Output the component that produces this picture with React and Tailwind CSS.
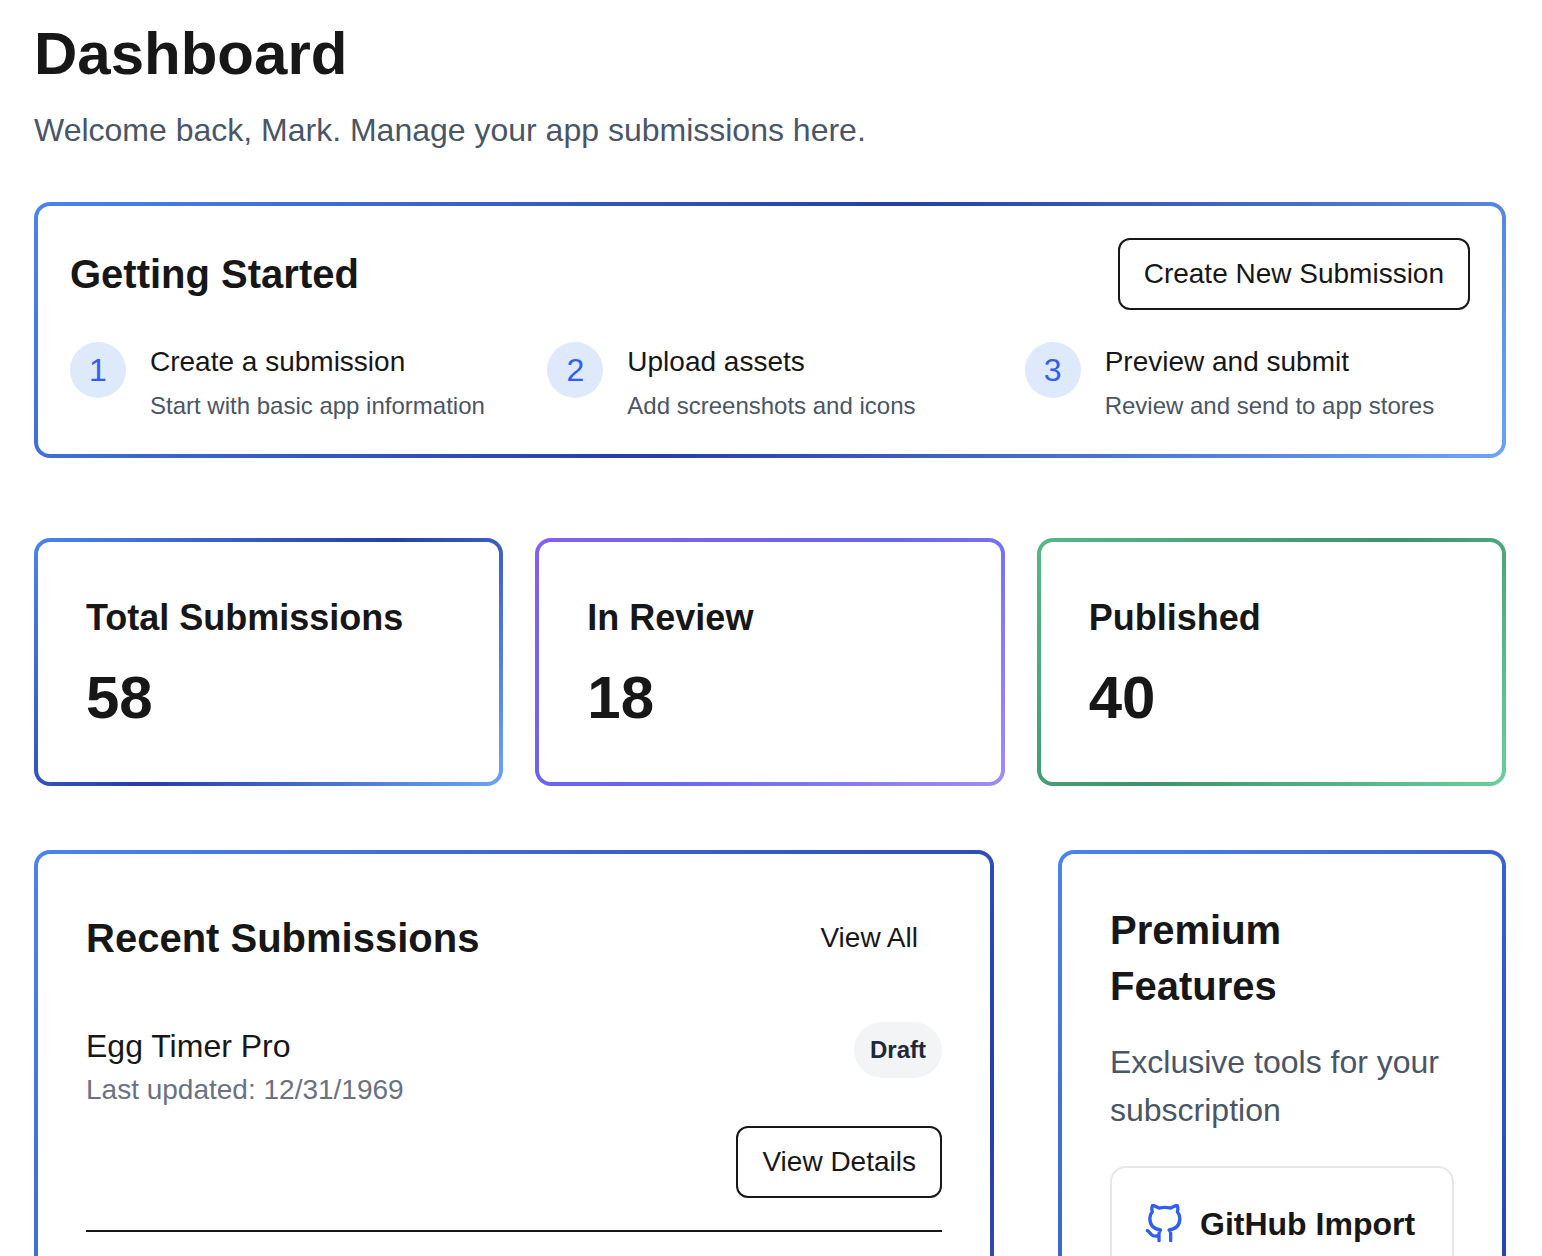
import { FiGithub } from 'react-icons/fi';

const steps = [
  { title: 'Create a submission', text: 'Start with basic app information' },
  { title: 'Upload assets', text: 'Add screenshots and icons' },
  { title: 'Preview and submit', text: 'Review and send to app stores' },
];

const stats = [
  { label: 'Total Submissions', value: 58, tone: 'blue' },
  { label: 'In Review', value: 18, tone: 'violet' },
  { label: 'Published', value: 40, tone: 'green' },
];

const submissions = [{ name: 'Egg Timer Pro', updated: '12/31/1969', status: 'Draft' }];

const tones = {
  blue: 'from-[#4c83ee] via-[#253ea8] to-[#6ca4f8]',
  violet: 'from-[#855ef0] via-[#6466eb] to-[#a28cf5]',
  green: 'from-[#56b785] via-[#41916b] to-[#69d09d]',
};

const GradientCard = ({ tone = 'blue', className = '', children }) => (
  <section className={`flex rounded-2xl bg-linear-135/srgb p-1 ${tones[tone]}`}>
    <div className={`min-w-0 flex-1 rounded-xl bg-white ${className}`}>{children}</div>
  </section>
);

const OutlineButton = ({ children }) => (
  <button
    type="button"
    className="h-[72px] rounded-xl border-2 border-neutral-900 px-6 text-[28px] leading-10 hover:bg-gray-100"
  >
    {children}
  </button>
);

const SubmissionRow = ({ submission }) => (
  <li className="border-b-2 border-neutral-900 pb-8">
    <div className="flex items-start justify-between">
      <div>
        <h3 className="text-[32px] leading-12">{submission.name}</h3>
        <p className="text-[28px] leading-10 text-gray-500">Last updated: {submission.updated}</p>
      </div>
      <span className="rounded-full bg-gray-100 px-4 py-3 text-2xl font-semibold text-gray-800">
        {submission.status}
      </span>
    </div>
    <div className="mt-4 flex justify-end">
      <OutlineButton>View Details</OutlineButton>
    </div>
  </li>
);

const App = () => {
  return (
    <main className="h-screen overflow-hidden bg-white pt-[18px] pr-9 pl-[34px] font-['Liberation_Sans',Arial,sans-serif] text-neutral-900">
      <header>
        <h1 className="text-6xl leading-[72px] font-bold">Dashboard</h1>
        <p className="mt-4 text-[32px] leading-12 text-gray-600">
          Welcome back, Mark. Manage your app submissions here.
        </p>
      </header>

      <div className="mt-12">
        <GradientCard className="p-8">
          <div className="flex items-center justify-between">
            <h2 className="text-[40px] leading-14 font-semibold">Getting Started</h2>
            <OutlineButton>Create New Submission</OutlineButton>
          </div>
          <ol className="mt-8 grid grid-cols-3 gap-8">
            {steps.map((step, index) => (
              <li key={step.title} className="flex items-start gap-6">
                <span className="flex size-14 shrink-0 items-center justify-center rounded-full bg-[#dee9fc] text-[32px] leading-12 text-[#2f5ef5]">
                  {index + 1}
                </span>
                <div>
                  <h3 className="text-[28px] leading-10">{step.title}</h3>
                  <p className="mt-2 text-2xl text-gray-600">{step.text}</p>
                </div>
              </li>
            ))}
          </ol>
        </GradientCard>
      </div>

      <div className="mt-20 grid grid-cols-3 gap-8">
        {stats.map((stat) => (
          <GradientCard key={stat.label} tone={stat.tone} className="p-12">
            <h2 className="text-4xl leading-14 font-semibold">{stat.label}</h2>
            <p className="mt-4 text-6xl leading-[72px] font-bold">{stat.value}</p>
          </GradientCard>
        ))}
      </div>

      <div className="mt-16 grid min-h-[1474px] grid-cols-3 gap-16">
        <div className="col-span-2 grid">
          <GradientCard className="p-12">
            <div className="flex items-center justify-between">
              <h2 className="text-[40px] leading-14 font-semibold">Recent Submissions</h2>
              <button type="button" className="h-[72px] rounded-xl px-6 text-[28px] leading-10 hover:bg-gray-100">
                View All
              </button>
            </div>
            <ul className="mt-12 space-y-8">
              {submissions.map((submission) => (
                <SubmissionRow key={submission.name} submission={submission} />
              ))}
            </ul>
          </GradientCard>
        </div>

        <GradientCard className="p-12">
          <h2 className="text-[40px] leading-14 font-semibold">Premium Features</h2>
          <p className="mt-6 text-[32px] leading-12 text-gray-600">Exclusive tools for your subscription</p>
          <div className="mt-8 rounded-2xl border-2 border-gray-200 p-8">
            <div className="flex items-center gap-4">
              <FiGithub className="size-10 text-[#2f5ef5]" />
              <h3 className="text-[32px] leading-12 font-semibold">GitHub Import</h3>
            </div>
          </div>
        </GradientCard>
      </div>
    </main>
  );
};

export default App;
